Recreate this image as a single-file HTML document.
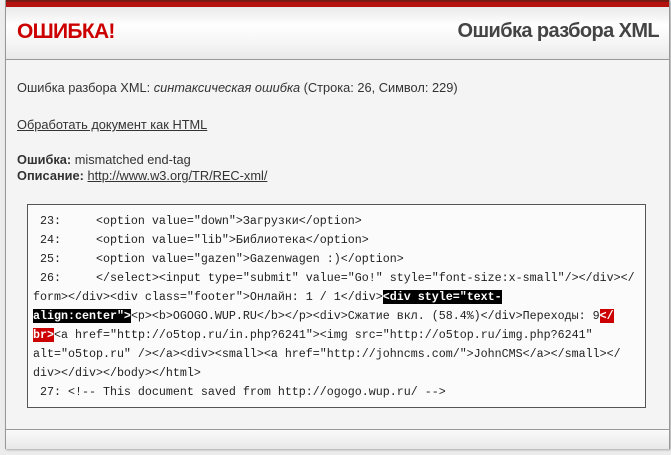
<!DOCTYPE html>
<html><head><meta charset="utf-8"><style>
body{margin:0;width:671px;height:455px;background:#ececec;overflow:hidden;font-family:"Liberation Sans",Arial,sans-serif;}
#f{position:absolute;left:5px;top:0;width:663px;height:449px;background:#f4f4f4;border-left:1px solid #999;border-right:1px solid #999;box-shadow:1px 1px 2px #aaa;}
#bar{position:absolute;left:0;top:0;width:100%;height:7px;background:#b5120f;border-top:2px solid #7a1a14;box-sizing:border-box;}
#hd{position:absolute;left:0;top:7px;width:100%;height:52px;background:linear-gradient(#e9e9e9,#fff 35%,#f5f5f5 70%,#e8e8e8);border-bottom:1px solid #999;}
#t1{position:absolute;left:11px;top:13px;font-size:21px;font-weight:bold;color:#cc0000;letter-spacing:-0.7px}
#t2{position:absolute;right:10px;top:13px;font-size:20px;font-weight:bold;color:#444;letter-spacing:-0.6px}
.tx{position:absolute;left:11px;font-size:12.8px;color:#333;}
a{color:#333}
#code{position:absolute;left:21px;top:204px;width:617px;height:202px;background:#fbfbfb;border:1px solid #555;}
pre{margin:0;position:absolute;left:5px;top:7px;font-family:"Liberation Mono","Courier New",monospace;font-size:11.67px;line-height:19px;color:#222;}
.b{background:#000;color:#fff;font-weight:bold}
.r{background:#c00;color:#fff;font-weight:bold}
#ft{position:absolute;left:0;top:429px;width:100%;height:20px;border-top:1px solid #999;background:linear-gradient(#fafafa,#e8e8e8);box-sizing:border-box;}
</style></head><body>
<div id="f">
<div id="bar"></div>
<div id="hd"><div id="t1">ОШИБКА!</div><div id="t2">Ошибка разбора XML</div></div>
<div class="tx" style="top:80px">Ошибка разбора XML: <i>синтаксическая ошибка</i> (Строка: 26, Символ: 229)</div>
<div class="tx" style="top:117px"><a href="#">Обработать документ как HTML</a></div>
<div class="tx" style="top:152px"><b>Ошибка:</b> mismatched end-tag</div>
<div class="tx" style="top:168px"><b>Описание:</b> <a href="#">http://www.w3.org/TR/REC-xml/</a></div>
<div id="code"><pre> 23:     &lt;option value="down"&gt;Загрузки&lt;/option&gt;
 24:     &lt;option value="lib"&gt;Библиотека&lt;/option&gt;
 25:     &lt;option value="gazen"&gt;Gazenwagen :)&lt;/option&gt;
 26:     &lt;/select&gt;&lt;input type="submit" value="Go!" style="font-size:x-small"/&gt;&lt;/div&gt;&lt;/
form&gt;&lt;/div&gt;&lt;div class="footer"&gt;Онлайн: 1 / 1&lt;/div&gt;<span class="b">&lt;div style="text-</span>
<span class="b">align:center"&gt;</span>&lt;p&gt;&lt;b&gt;OGOGO.WUP.RU&lt;/b&gt;&lt;/p&gt;&lt;div&gt;Сжатие вкл. (58.4%)&lt;/div&gt;Переходы: 9<span class="r">&lt;/</span>
<span class="r">br&gt;</span>&lt;a href="http://o5top.ru/in.php?6241"&gt;&lt;img src="http://o5top.ru/img.php?6241"
alt="o5top.ru" /&gt;&lt;/a&gt;&lt;div&gt;&lt;small&gt;&lt;a href="http://johncms.com/"&gt;JohnCMS&lt;/a&gt;&lt;/small&gt;&lt;/
div&gt;&lt;/div&gt;&lt;/body&gt;&lt;/html&gt;
 27: &lt;!-- This document saved from http://ogogo.wup.ru/ --&gt;</pre></div>
<div id="ft"></div>
</div>
</body></html>
